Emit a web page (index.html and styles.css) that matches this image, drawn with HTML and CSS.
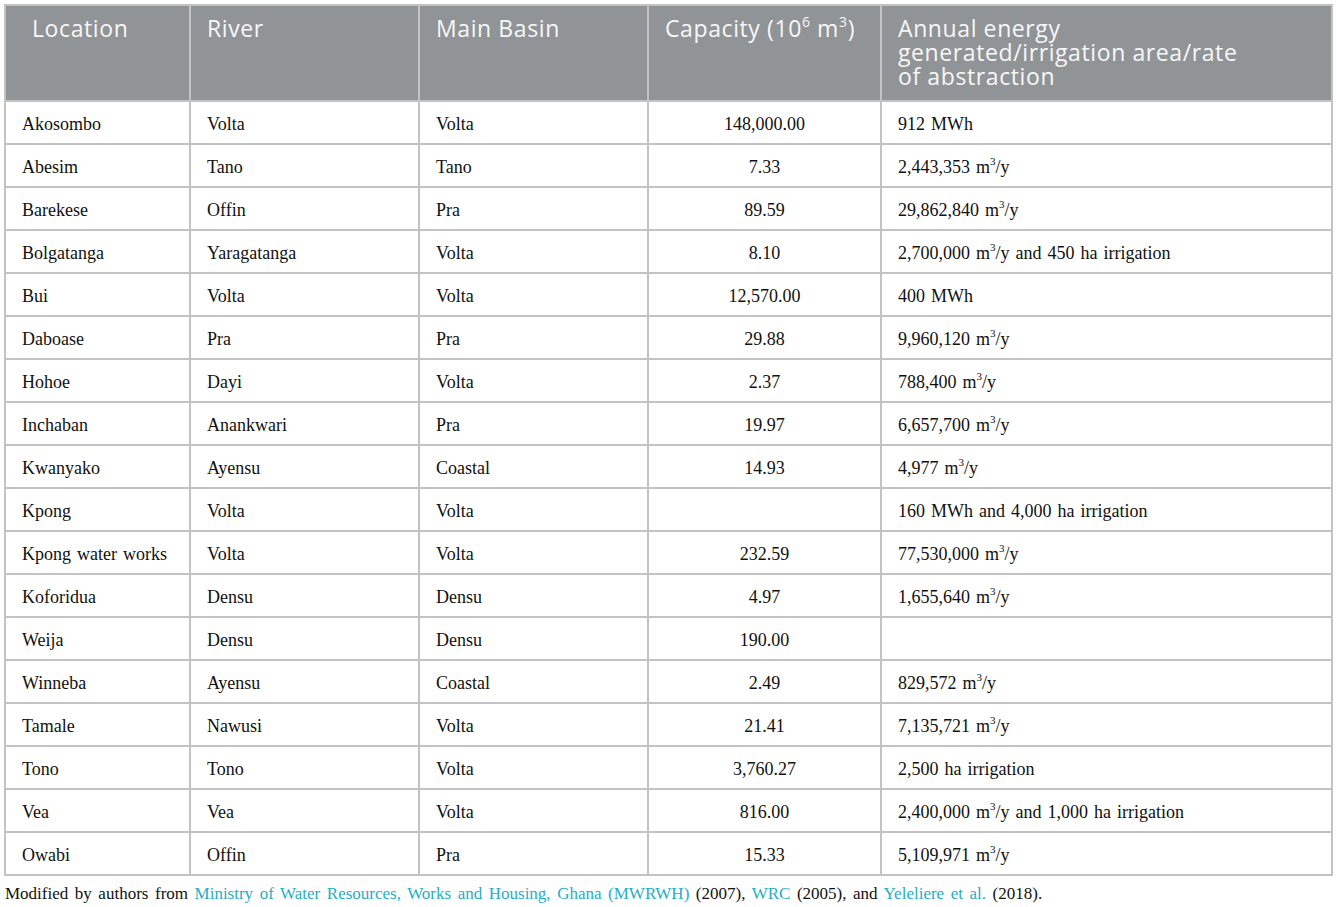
FILE: index.html
```html
<!DOCTYPE html>
<html lang="en">
<head>
    <meta charset="UTF-8">
    <title>Reservoirs in Ghana</title>
    <link rel="stylesheet" href="styles.css">
</head>
<body>
    <table class="data-table">
        <colgroup>
            <col class="col-location">
            <col class="col-river">
            <col class="col-basin">
            <col class="col-capacity">
            <col class="col-annual">
        </colgroup>
        <thead>
            <tr>
                <th class="first">Location</th>
                <th>River</th>
                <th>Main Basin</th>
                <th>Capacity (10<sup>6</sup> m<sup>3</sup>)</th>
                <th class="last">Annual energy generated/irrigation area/rate of abstraction</th>
            </tr>
        </thead>
        <tbody>
            <tr><td>Akosombo</td><td>Volta</td><td>Volta</td><td class="num">148,000.00</td><td>912 MWh</td></tr>
            <tr><td>Abesim</td><td>Tano</td><td>Tano</td><td class="num">7.33</td><td>2,443,353 m<sup>3</sup>/y</td></tr>
            <tr><td>Barekese</td><td>Offin</td><td>Pra</td><td class="num">89.59</td><td>29,862,840 m<sup>3</sup>/y</td></tr>
            <tr><td>Bolgatanga</td><td>Yaragatanga</td><td>Volta</td><td class="num">8.10</td><td>2,700,000 m<sup>3</sup>/y and 450 ha irrigation</td></tr>
            <tr><td>Bui</td><td>Volta</td><td>Volta</td><td class="num">12,570.00</td><td>400 MWh</td></tr>
            <tr><td>Daboase</td><td>Pra</td><td>Pra</td><td class="num">29.88</td><td>9,960,120 m<sup>3</sup>/y</td></tr>
            <tr><td>Hohoe</td><td>Dayi</td><td>Volta</td><td class="num">2.37</td><td>788,400 m<sup>3</sup>/y</td></tr>
            <tr><td>Inchaban</td><td>Anankwari</td><td>Pra</td><td class="num">19.97</td><td>6,657,700 m<sup>3</sup>/y</td></tr>
            <tr><td>Kwanyako</td><td>Ayensu</td><td>Coastal</td><td class="num">14.93</td><td>4,977 m<sup>3</sup>/y</td></tr>
            <tr><td>Kpong</td><td>Volta</td><td>Volta</td><td class="num"></td><td>160 MWh and 4,000 ha irrigation</td></tr>
            <tr><td>Kpong water works</td><td>Volta</td><td>Volta</td><td class="num">232.59</td><td>77,530,000 m<sup>3</sup>/y</td></tr>
            <tr><td>Koforidua</td><td>Densu</td><td>Densu</td><td class="num">4.97</td><td>1,655,640 m<sup>3</sup>/y</td></tr>
            <tr><td>Weija</td><td>Densu</td><td>Densu</td><td class="num">190.00</td><td></td></tr>
            <tr><td>Winneba</td><td>Ayensu</td><td>Coastal</td><td class="num">2.49</td><td>829,572 m<sup>3</sup>/y</td></tr>
            <tr><td>Tamale</td><td>Nawusi</td><td>Volta</td><td class="num">21.41</td><td>7,135,721 m<sup>3</sup>/y</td></tr>
            <tr><td>Tono</td><td>Tono</td><td>Volta</td><td class="num">3,760.27</td><td>2,500 ha irrigation</td></tr>
            <tr><td>Vea</td><td>Vea</td><td>Volta</td><td class="num">816.00</td><td>2,400,000 m<sup>3</sup>/y and 1,000 ha irrigation</td></tr>
            <tr><td>Owabi</td><td>Offin</td><td>Pra</td><td class="num">15.33</td><td>5,109,971 m<sup>3</sup>/y</td></tr>
        </tbody>
    </table>

    <p class="caption">Modified by authors from <a href="#">Ministry of Water Resources, Works and Housing, Ghana (MWRWH)</a> (2007), <a href="#">WRC</a> (2005), and <a href="#">Yeleliere et al.</a> (2018).</p>
</body>
</html>
```

FILE: styles.css
```css
body {
    margin: 4px;
    background-color: #fff;
    font-family: "Liberation Serif", "Times New Roman", serif;
    color: #111;
}
.data-table {
    width: 1329px;
    border-collapse: collapse;
    table-layout: fixed;
    border: 2px solid #c3c3c3;
}
.col-location { width: 185px; }
.col-river { width: 229px; }
.col-basin { width: 229px; }
.col-capacity { width: 233px; }
.data-table th {
    background-color: #909497;
    color: #f7f7f7;
    font-family: "Open Sans", "Noto Sans", sans-serif;
    font-weight: 400;
    font-size: 23px;
    letter-spacing: 0.6px;
    line-height: 24px;
    text-align: left;
    vertical-align: top;
    height: 96px;
    box-sizing: border-box;
    padding: 10px 12px 0 16px;
    border: 2px solid #c3c3c3;
    border-top: none;
}
.data-table th.first {
    padding-left: 26px;
}
.data-table th.last {
    padding-right: 90px;
}
.data-table th sup {
    font-size: 14px;
    line-height: 0;
    vertical-align: 10px;
}
.data-table td {
    font-size: 18px;
    word-spacing: 1.5px;
    height: 43px;
    box-sizing: border-box;
    padding: 3px 16px 0;
    border: 2px solid #c3c3c3;
    vertical-align: middle;
}
.data-table td sup {
    font-size: 11px;
    line-height: 0;
    vertical-align: 8px;
    word-spacing: 0;
}
.data-table td.num {
    text-align: center;
}
.caption {
    margin: 8px 0 0 1px;
    font-size: 17px;
    word-spacing: 2.3px;
    color: #111;
}
.caption a {
    color: #1eaec6;
    text-decoration: none;
}
```
